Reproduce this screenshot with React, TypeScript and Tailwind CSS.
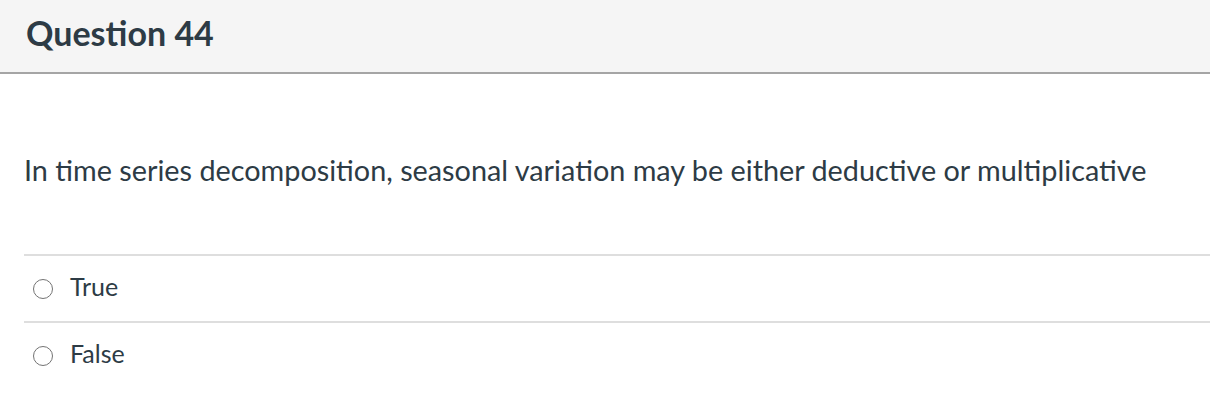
export default function App() {
  const answers = ["True", "False"];
  return (
    <div className="w-[1210px] h-[400px] bg-white text-[#2d3b45]" style={{ fontFamily: "Lato, 'Noto Sans', sans-serif" }}>
      {/* Header */}
      <div className="h-[74px] bg-[#f5f5f5] border-b-2 border-[#a5a5a5] flex items-center px-[26px]">
        <h2 className="text-[34px] font-bold leading-none -mt-[6px]">Question 44</h2>
      </div>

      {/* Question text */}
      <div className="pl-[24px] pt-[78px] pb-[66px]">
        <p className="text-[28.8px] leading-[36px]">
          In time series decomposition, seasonal variation may be either deductive or multiplicative
        </p>
      </div>

      {/* Answers */}
      <div className="ml-[24px]">
        {answers.map((a) => (
          <div key={a} className="h-[67px] border-t-2 border-[#dedede] flex items-center">
            <span className="ml-[9px] w-[20px] h-[20px] rounded-full border-[1.5px] border-[#737373] bg-white shrink-0" />
            <span className="ml-[17px] text-[25px] -mt-[4px]">{a}</span>
          </div>
        ))}
      </div>
    </div>
  );
}
